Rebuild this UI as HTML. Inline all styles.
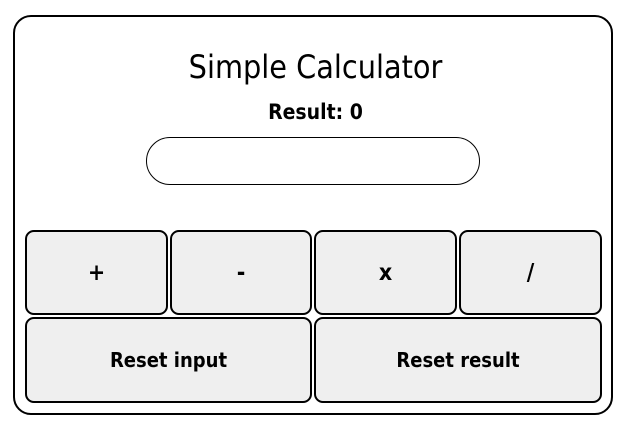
<!DOCTYPE html>
<html><head><style>
body{margin:0;width:631px;height:428px;background:#fff;font-family:"DejaVu Sans Condensed","Liberation Sans",sans-serif;position:relative;overflow:hidden}
.c{position:absolute;left:13px;top:15px;width:596px;height:396px;border:2px solid #000;border-radius:18px}
.t{position:absolute;left:0;width:631px;text-align:center}
.b{position:absolute;box-sizing:border-box;border:2px solid #000;border-radius:9px;background:#efefef;display:flex;align-items:center;justify-content:center;font-size:20px;font-weight:bold}
.o{font-size:23px}
</style></head><body>
<div class="c"></div>
<div class="t" style="top:48px;font-size:32px;">Simple Calculator</div>
<div class="t" style="top:100px;font-size:21px;font-weight:bold">Result: 0</div>
<div style="position:absolute;left:146px;top:137px;width:332px;height:46px;border:1px solid #000;border-radius:24px"></div>
<div class="b o" style="left:25px;top:230px;width:143px;height:85px">+</div>
<div class="b o" style="left:170px;top:230px;width:142px;height:85px">-</div>
<div class="b o" style="left:314px;top:230px;width:143px;height:85px">x</div>
<div class="b o" style="left:459px;top:230px;width:143px;height:85px">/</div>
<div class="b" style="left:25px;top:317px;width:287px;height:86px">Reset input</div>
<div class="b" style="left:314px;top:317px;width:288px;height:86px">Reset result</div>
</body></html>
